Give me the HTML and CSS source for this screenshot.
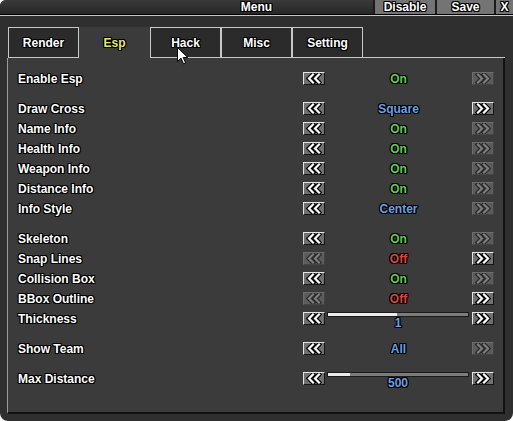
FILE: index.html
```html
<!DOCTYPE html>
<html>
<head>
<meta charset="utf-8">
<link rel="stylesheet" href="styles.css">
</head>
<body>
<svg class="defs" width="0" height="0">
  <symbol id="cl" viewBox="0 0 16 11">
    <path d="M7 1.5 L3 5.5 L7 9.5 M13 1.5 L9 5.5 L13 9.5" fill="none" stroke="currentColor" stroke-width="4.6" stroke-linecap="square"/>
    <path d="M7 1.5 L3 5.5 L7 9.5 M13 1.5 L9 5.5 L13 9.5" fill="none" stroke-width="2.2" stroke-linecap="square"/>
  </symbol>
  <symbol id="cr" viewBox="0 0 16 11">
    <path d="M3 1.5 L7 5.5 L3 9.5 M9 1.5 L13 5.5 L9 9.5" fill="none" stroke="currentColor" stroke-width="4.6" stroke-linecap="square"/>
    <path d="M3 1.5 L7 5.5 L3 9.5 M9 1.5 L13 5.5 L9 9.5" fill="none" stroke-width="2.2" stroke-linecap="square"/>
  </symbol>
</svg>
<div class="window">
  <div class="titlebar">
    <div></div>
    <div class="title">Menu</div>
    <div class="tbtns">
      <span class="tbtn t-disable">Disable</span><span class="tbtn t-save">Save</span><span class="tbtn t-x">X</span>
    </div>
  </div>
  <div class="tabs">
    <div class="tab">Render</div>
    <div class="tab active">Esp</div>
    <div class="tab">Hack</div>
    <div class="tab">Misc</div>
    <div class="tab">Setting</div>
    <div class="tab-fill"></div>
  </div>
  <div class="panel">
    <div class="row"><span class="label">Enable Esp</span><div class="ctrl"><span class="btn"><svg class="chev"><use href="#cl"/></svg></span><span class="val on">On</span><span class="btn dis"><svg class="chev"><use href="#cr"/></svg></span></div></div>
    <div class="gap"></div>
    <div class="row"><span class="label">Draw Cross</span><div class="ctrl"><span class="btn"><svg class="chev"><use href="#cl"/></svg></span><span class="val blue">Square</span><span class="btn"><svg class="chev"><use href="#cr"/></svg></span></div></div>
    <div class="row"><span class="label">Name Info</span><div class="ctrl"><span class="btn"><svg class="chev"><use href="#cl"/></svg></span><span class="val on">On</span><span class="btn dis"><svg class="chev"><use href="#cr"/></svg></span></div></div>
    <div class="row"><span class="label">Health Info</span><div class="ctrl"><span class="btn"><svg class="chev"><use href="#cl"/></svg></span><span class="val on">On</span><span class="btn dis"><svg class="chev"><use href="#cr"/></svg></span></div></div>
    <div class="row"><span class="label">Weapon Info</span><div class="ctrl"><span class="btn"><svg class="chev"><use href="#cl"/></svg></span><span class="val on">On</span><span class="btn dis"><svg class="chev"><use href="#cr"/></svg></span></div></div>
    <div class="row"><span class="label">Distance Info</span><div class="ctrl"><span class="btn"><svg class="chev"><use href="#cl"/></svg></span><span class="val on">On</span><span class="btn dis"><svg class="chev"><use href="#cr"/></svg></span></div></div>
    <div class="row"><span class="label">Info Style</span><div class="ctrl"><span class="btn"><svg class="chev"><use href="#cl"/></svg></span><span class="val blue">Center</span><span class="btn dis"><svg class="chev"><use href="#cr"/></svg></span></div></div>
    <div class="gap"></div>
    <div class="row"><span class="label">Skeleton</span><div class="ctrl"><span class="btn"><svg class="chev"><use href="#cl"/></svg></span><span class="val on">On</span><span class="btn dis"><svg class="chev"><use href="#cr"/></svg></span></div></div>
    <div class="row"><span class="label">Snap Lines</span><div class="ctrl"><span class="btn dis"><svg class="chev"><use href="#cl"/></svg></span><span class="val off">Off</span><span class="btn"><svg class="chev"><use href="#cr"/></svg></span></div></div>
    <div class="row"><span class="label">Collision Box</span><div class="ctrl"><span class="btn"><svg class="chev"><use href="#cl"/></svg></span><span class="val on">On</span><span class="btn dis"><svg class="chev"><use href="#cr"/></svg></span></div></div>
    <div class="row"><span class="label">BBox Outline</span><div class="ctrl"><span class="btn dis"><svg class="chev"><use href="#cl"/></svg></span><span class="val off">Off</span><span class="btn"><svg class="chev"><use href="#cr"/></svg></span></div></div>
    <div class="row"><span class="label">Thickness</span><div class="ctrl"><span class="btn"><svg class="chev"><use href="#cl"/></svg></span><div class="slider"><div class="track"><div class="fill" style="width:49%"></div></div><span class="sval blue">1</span></div><span class="btn"><svg class="chev"><use href="#cr"/></svg></span></div></div>
    <div class="gap"></div>
    <div class="row"><span class="label">Show Team</span><div class="ctrl"><span class="btn"><svg class="chev"><use href="#cl"/></svg></span><span class="val blue">All</span><span class="btn dis"><svg class="chev"><use href="#cr"/></svg></span></div></div>
    <div class="gap"></div>
    <div class="row"><span class="label">Max Distance</span><div class="ctrl"><span class="btn"><svg class="chev"><use href="#cl"/></svg></span><div class="slider"><div class="track"><div class="fill" style="width:16%"></div></div><span class="sval blue">500</span></div><span class="btn"><svg class="chev"><use href="#cr"/></svg></span></div></div>
  </div>
  <svg class="cursor" width="12" height="18" viewBox="0 0 12 18">
    <path d="M0.5 0.5 L0.5 14.5 L4 11.2 L6.5 16.8 L8.6 15.8 L6.2 10.5 L10.8 10.5 Z" fill="#fff" stroke="#000" stroke-width="1"/>
  </svg>
</div>
</body>
</html>
```
FILE: styles.css
```css
* { box-sizing: border-box; }

body {
  margin: 0;
  background: #ffffff;
  font-family: "Liberation Sans", Arial, sans-serif;
  font-weight: bold;
  font-size: 12px;
  color: #ffffff;
}

.defs {
  position: absolute;
  width: 0;
  height: 0;
  overflow: hidden;
}

.window {
  position: relative;
  width: 513px;
  height: 421px;
  background: #2f2f2f;
  border-radius: 6px 0 8px 8px;
  overflow: hidden;
}

.title, .tbtn, .tab, .label, .val, .sval {
  text-shadow: -1px 0 #000, 1px 0 #000, 0 -1px #000, 0 1px #000,
               -1px -1px #000, 1px 1px #000, -1px 1px #000, 1px -1px #000;
}

.titlebar {
  display: grid;
  grid-template-columns: 1fr auto 1fr;
  height: 16px;
  background: linear-gradient(#3a3a3a, #262626);
  border-bottom: 1px solid #c8c8c8;
  box-shadow: inset 0 -1px 0 #000;
}

.title {
  line-height: 15px;
  text-align: center;
}

.tbtns {
  display: flex;
  justify-content: flex-end;
  height: 14px;
}

.tbtn {
  display: block;
  height: 14px;
  line-height: 15px;
  text-align: center;
  background: #747474;
  border-left: 2px solid #1b1b1b;
}

.t-disable { width: 62px; }
.t-save { width: 59px; }
.t-x { width: 19px; }

.tabs {
  display: flex;
  margin-top: 11px;
  padding-left: 8px;
  height: 31px;
}

.tab {
  width: 71px;
  height: 31px;
  padding-top: 1px;
  line-height: 28px;
  text-align: center;
  background: #2b2b2b;
  border: 1px solid #c8c8c8;
}

.tab.active {
  background: #3b3b3b;
  border-color: transparent;
  color: #e8e47a;
}

.tab-fill {
  width: 142px;
  border-bottom: 1px solid #c8c8c8;
}

.panel {
  margin-left: 7px;
  width: 498px;
  height: 356px;
  background: #3b3b3b;
  border-left: 1px solid #9a9a9a;
  border-right: 2px solid #111;
  border-bottom: 2px solid #111;
  padding: 10px 9px 0 10px;
}

.row {
  display: grid;
  grid-template-columns: 1fr 191px;
  align-items: center;
  height: 20px;
}

.gap { height: 10px; }

.label {
  line-height: 14px;
  padding-top: 2px;
}

.ctrl {
  display: grid;
  grid-template-columns: 22px 1fr 22px;
  align-items: center;
  height: 20px;
}

.btn {
  display: flex;
  align-items: center;
  justify-content: center;
  width: 22px;
  height: 13px;
  background: #717171;
  border: 1px solid;
  border-color: #e4e4e4 #161616 #161616 #e4e4e4;
}

.btn.dis {
  background: #5c5c5c;
  border-color: #6c6c6c #444 #444 #6c6c6c;
}

.chev {
  width: 16px;
  height: 11px;
  color: #000;
  stroke: #fff;
}

.btn.dis .chev {
  color: #2a2a2a;
  stroke: #7e7e7e;
}

.val {
  text-align: center;
  line-height: 14px;
  padding-top: 2px;
}

.on { color: #63c955; }
.off { color: #d9473c; }
.blue { color: #6ba0e4; }

.slider {
  align-self: start;
  padding: 4px 3px 0 2px;
  display: flex;
  flex-direction: column;
}

.track {
  height: 5px;
  background: #7c7c7c;
  border: 1px solid #1a1a1a;
}

.fill {
  height: 100%;
  background: #ececec;
}

.sval {
  text-align: center;
  line-height: 10px;
  margin-top: 1px;
}

.cursor {
  position: absolute;
  left: 177px;
  top: 47px;
}
```
